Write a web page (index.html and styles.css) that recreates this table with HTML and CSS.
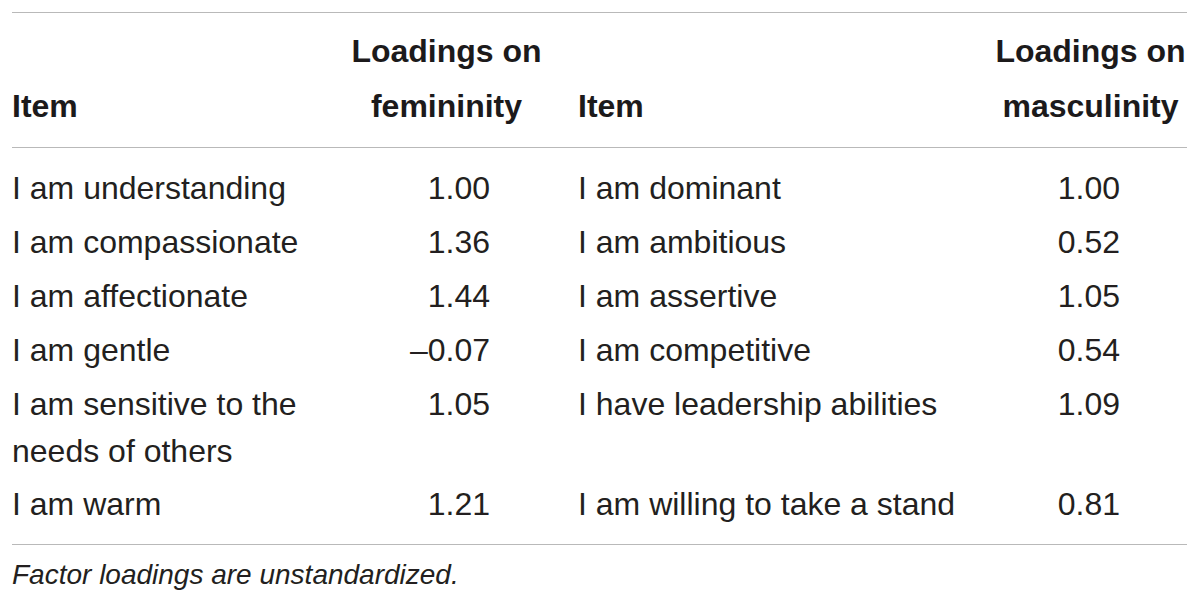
FILE: index.html
```html
<!DOCTYPE html>
<html lang="en">
<head>
<meta charset="utf-8">
<title>Factor loadings</title>
<link rel="stylesheet" href="styles.css">
</head>
<body>
<div class="page">
  <table class="loadings">
    <colgroup>
      <col class="c-item1">
      <col class="c-load1">
      <col class="c-item2">
      <col class="c-load2">
    </colgroup>
    <thead>
      <tr>
        <th class="item">Item</th>
        <th class="load">Loadings on femininity</th>
        <th class="item">Item</th>
        <th class="load">Loadings on masculinity</th>
      </tr>
    </thead>
    <tbody>
      <tr>
        <td class="item">I am understanding</td>
        <td class="num num-f">1.00</td>
        <td class="item">I am dominant</td>
        <td class="num num-m">1.00</td>
      </tr>
      <tr>
        <td class="item">I am compassionate</td>
        <td class="num num-f">1.36</td>
        <td class="item">I am ambitious</td>
        <td class="num num-m">0.52</td>
      </tr>
      <tr>
        <td class="item">I am affectionate</td>
        <td class="num num-f">1.44</td>
        <td class="item">I am assertive</td>
        <td class="num num-m">1.05</td>
      </tr>
      <tr>
        <td class="item">I am gentle</td>
        <td class="num num-f">–0.07</td>
        <td class="item">I am competitive</td>
        <td class="num num-m">0.54</td>
      </tr>
      <tr>
        <td class="item">I am sensitive to the needs of others</td>
        <td class="num num-f">1.05</td>
        <td class="item">I have leadership abilities</td>
        <td class="num num-m">1.09</td>
      </tr>
      <tr>
        <td class="item">I am warm</td>
        <td class="num num-f">1.21</td>
        <td class="item">I am willing to take a stand</td>
        <td class="num num-m">0.81</td>
      </tr>
    </tbody>
  </table>
  <p class="note">Factor loadings are unstandardized.</p>
</div>
</body>
</html>
```
FILE: styles.css
```css
html, body {
  margin: 0;
  padding: 0;
  background: #ffffff;
}

.page {
  padding: 12px 0 0 12px;
  font-family: "Liberation Sans", Arial, sans-serif;
  color: #231f20;
}

.loadings {
  width: 1175px;
  table-layout: fixed;
  border-collapse: collapse;
  border-top: 1px solid #b9b9b9;
  border-bottom: 1px solid #b9b9b9;
  font-size: 32px;
}

.c-item1 { width: 303px; }
.c-load1 { width: 263px; }
.c-item2 { width: 416px; }
.c-load2 { width: 193px; }

.loadings th {
  font-weight: bold;
  line-height: 55px;
  padding: 11px 0 13px 0;
  border-bottom: 1px solid #b9b9b9;
  color: #1c1a1b;
}

.loadings th.item {
  text-align: left;
  vertical-align: bottom;
}

.loadings th.load {
  text-align: center;
  vertical-align: bottom;
}

.loadings td {
  font-weight: normal;
  line-height: 47px;
  padding: 3px 0 4px 0;
  vertical-align: top;
}

.loadings tbody tr:first-child td {
  padding-top: 17px;
}

.loadings tbody tr:last-child td {
  padding-top: 2px;
  padding-bottom: 16px;
}

.loadings td.item {
  text-align: left;
}

.loadings td.num {
  text-align: right;
}

.loadings td.num-f {
  padding-right: 88px;
}

.loadings td.num-m {
  padding-right: 67px;
}

.note {
  margin: 13px 0 0 0;
  font-size: 28px;
  line-height: 34px;
  font-style: italic;
  color: #231f20;
}
```
